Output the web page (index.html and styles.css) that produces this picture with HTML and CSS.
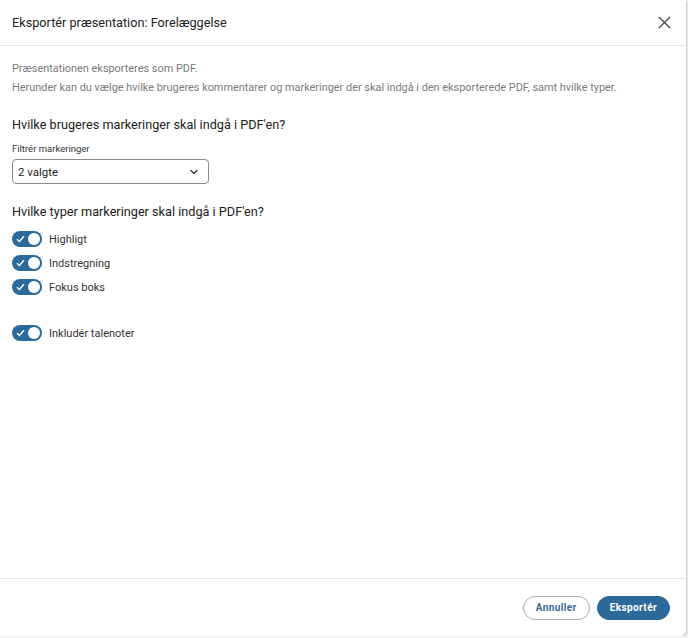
FILE: index.html
```html
<!DOCTYPE html>
<html>
<head>
    <title>Eksportér præsentation</title>
    <link rel="stylesheet" href="styles.css">
</head>
<body>
    <div class="dialog">
        <div class="dialog-header">
            <h1>Eksportér præsentation: Forelæggelse</h1>
            <button class="close-button" aria-label="Luk">
                <svg width="13" height="13" viewBox="0 0 14 14"><path d="M1 1L13 13M13 1L1 13" stroke="#444" stroke-width="1.4" fill="none"/></svg>
            </button>
        </div>

        <div class="dialog-body">
            <p class="intro">Præsentationen eksporteres som PDF.<br>Herunder kan du vælge hvilke brugeres kommentarer og markeringer der skal indgå i den eksporterede PDF, samt hvilke typer.</p>

            <h2>Hvilke brugeres markeringer skal indgå i PDF'en?</h2>
            <label class="field-label">Filtrér markeringer</label>
            <div class="select-box">
                <span>2 valgte</span>
                <svg width="10" height="6" viewBox="0 0 10 6"><path d="M1.5 1L5 4.5L8.5 1" stroke="#333" stroke-width="1.3" fill="none"/></svg>
            </div>

            <h2>Hvilke typer markeringer skal indgå i PDF'en?</h2>
            <div class="toggle-list">
                <div class="toggle-row"><span class="toggle"><svg width="9" height="8" viewBox="0 0 9 8"><path d="M1 4.2L3.4 6.5L8 1.3" stroke="#fff" stroke-width="1.4" fill="none"/></svg><i></i></span>Highligt</div>
                <div class="toggle-row"><span class="toggle"><svg width="9" height="8" viewBox="0 0 9 8"><path d="M1 4.2L3.4 6.5L8 1.3" stroke="#fff" stroke-width="1.4" fill="none"/></svg><i></i></span>Indstregning</div>
                <div class="toggle-row"><span class="toggle"><svg width="9" height="8" viewBox="0 0 9 8"><path d="M1 4.2L3.4 6.5L8 1.3" stroke="#fff" stroke-width="1.4" fill="none"/></svg><i></i></span>Fokus boks</div>
            </div>
            <div class="toggle-list notes">
                <div class="toggle-row"><span class="toggle"><svg width="9" height="8" viewBox="0 0 9 8"><path d="M1 4.2L3.4 6.5L8 1.3" stroke="#fff" stroke-width="1.4" fill="none"/></svg><i></i></span>Inkludér talenoter</div>
            </div>
        </div>

        <div class="dialog-footer">
            <button class="btn btn-outline">Annuller</button>
            <button class="btn btn-primary">Eksportér</button>
        </div>
    </div>
</body>
</html>
```

FILE: styles.css
```css
body {
    margin: 0;
    font-family: Roboto, "Liberation Sans", sans-serif;
    background-color: #f2f2f2;
}

.dialog {
    width: 686px;
    height: 636px;
    background-color: white;
    border-radius: 0 0 6px 0;
    box-shadow: 1px 1px 2px rgba(0, 0, 0, 0.18);
    display: flex;
    flex-direction: column;
}

.dialog-header {
    height: 45px;
    border-bottom: 1px solid #e2e2e2;
    display: flex;
    align-items: center;
    justify-content: space-between;
    padding: 0 15px 0 12px;
}

.dialog-header h1 {
    margin: 0;
    font-size: 12.7px;
    font-weight: 400;
    color: #222;
}

.close-button {
    background: none;
    border: none;
    padding: 0;
    cursor: pointer;
    display: flex;
}

.dialog-body {
    flex: 1;
    padding: 13px 12px 0 12px;
}

.intro {
    margin: 0;
    font-size: 10.9px;
    line-height: 19px;
    color: #7a7a7a;
}

h2 {
    margin: 0;
    font-size: 12.7px;
    font-weight: 400;
    color: #222;
    margin-top: 20px;
}

.field-label {
    display: block;
    margin-top: 11px;
    font-size: 9.5px;
    color: #333;
}

.select-box {
    margin-top: 5px;
    width: 197px;
    height: 25px;
    box-sizing: border-box;
    border: 1px solid #8a8a8a;
    border-radius: 4px;
    padding: 0 9px 0 5px;
    display: flex;
    align-items: center;
    justify-content: space-between;
    font-size: 11.5px;
    color: #222;
}

.toggle-list {
    margin-top: 8px;
    display: grid;
}

.toggle-list.notes {
    margin-top: 22px;
}

.toggle-row {
    display: flex;
    align-items: center;
    gap: 7px;
    font-size: 11px;
    color: #333;
    height: 24px;
}

.toggle {
    width: 30px;
    height: 16px;
    border-radius: 8px;
    background-color: #2c6a9c;
    display: flex;
    align-items: center;
    justify-content: space-between;
    padding: 0 2px 0 4px;
    box-sizing: border-box;
}

.toggle i {
    width: 12px;
    height: 12px;
    border-radius: 50%;
    background-color: white;
}

.dialog-footer {
    height: 57px;
    border-top: 1px solid #e2e2e2;
    display: flex;
    justify-content: flex-end;
    align-items: center;
    gap: 7px;
    padding: 0 16px 0 0;
}

.btn {
    height: 24px;
    border-radius: 12px;
    font-family: Roboto, "Liberation Sans", sans-serif;
    font-size: 10px;
    font-weight: 700;
    letter-spacing: 0.4px;
    cursor: pointer;
    padding: 0 12px;
}

.btn-outline {
    background-color: white;
    border: 1px solid #a8acb8;
    color: #3a6a94;
}

.btn-primary {
    background-color: #2c6a9c;
    border: 1px solid #2c6a9c;
    color: white;
}
```
